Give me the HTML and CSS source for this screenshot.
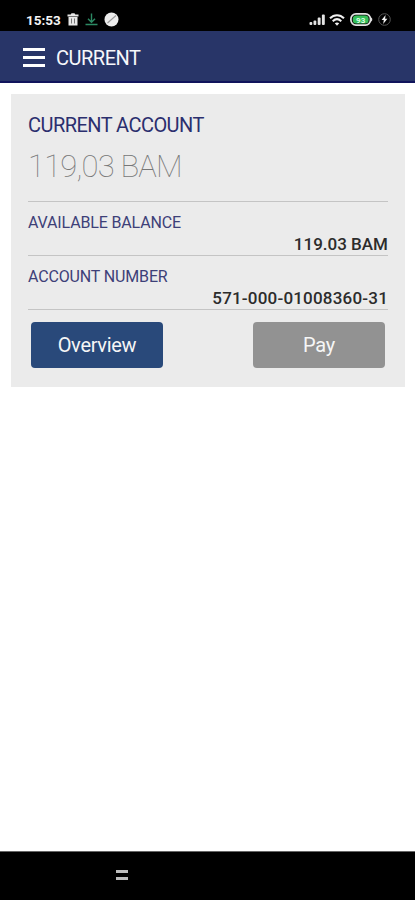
FILE: index.html
```
<!DOCTYPE html>
<html lang="en">
<head>
    <meta charset="UTF-8">
    <meta name="viewport" content="width=device-width, initial-scale=1.0">
    <title>Current</title>
    <link rel="stylesheet" href="styles.css">
</head>
<body>
    <div class="status-bar">
        <div class="status-left">
            <span class="time">15:53</span>
            <svg class="icon-trash" width="12" height="13" viewBox="0 0 12 13">
                <path d="M0.5 1.5h3.2l0.8-1.3h3l0.8 1.3h3.2v2H0.5zM1.5 4h9v8.5h-9z" fill="#e8e8e8"/>
                <path d="M4.5 5.5v5M7.5 5.5v5" stroke="#777" stroke-width="1"/>
            </svg>
            <svg class="icon-download" width="13" height="13" viewBox="0 0 13 13" fill="none" stroke="#2c8a64" stroke-width="1.4">
                <path d="M6.5 0.5v8.5M3 5.8l3.5 3.5L10 5.8M0.5 11.5h12"/>
            </svg>
            <svg width="15" height="15" viewBox="0 0 15 15">
                <circle cx="7.5" cy="7.5" r="7" fill="#ececec"/>
                <path d="M3.5 11L12 3.5" stroke="#999" stroke-width="1.1"/>
            </svg>
        </div>
        <div class="status-right">
            <svg width="16" height="11" viewBox="0 0 16 11" fill="#e4e4e4">
                <rect x="0.5" y="8" width="2.8" height="3" rx="1"/>
                <rect x="4.5" y="6.5" width="2.8" height="4.5" rx="1"/>
                <rect x="8.7" y="3.5" width="2.9" height="7.5" rx="1"/>
                <rect x="12.9" y="0.5" width="2.9" height="10.5" rx="1"/>
            </svg>
            <svg width="16" height="12" viewBox="0 0 16 12" fill="none" stroke="#f0f0f0" stroke-width="2">
                <path d="M1 4.3C5 0.2 11 0.2 15 4.3M3.7 7.2c2.6-2.5 6-2.5 8.6 0"/>
                <path d="M5.8 9.2Q8 7.6 10.2 9.2L8 11.8z" fill="#f0f0f0" stroke="none"/>
            </svg>
            <svg class="icon-battery" width="23" height="13" viewBox="0 0 23 13">
                <path d="M21 4.5c1.7 0.3 1.7 3.7 0 4z" fill="#ddd"/>
                <rect x="0.9" y="0.9" width="19.6" height="11.2" rx="5" fill="#111" stroke="#e2e2e2" stroke-width="1.7"/>
                <rect x="2.8" y="2.6" width="15.8" height="7.8" rx="3.5" fill="#35bf58"/>
                <text class="battery-level" x="10.7" y="9.5" text-anchor="middle">93</text>
            </svg>
            <svg width="13" height="13" viewBox="0 0 13 13">
                <circle cx="6.5" cy="6.5" r="5.8" fill="none" stroke="#555" stroke-width="1"/>
                <path d="M7.6 2L3.6 7h2.2L5.2 11l4.2-5.2H7.1z" fill="#f2f2f2"/>
            </svg>
        </div>
    </div>

    <div class="header">
        <div class="menu-btn">
            <span class="menu-line"></span>
            <span class="menu-line"></span>
            <span class="menu-line"></span>
        </div>
        <div class="header-title">CURRENT</div>
    </div>

    <div class="content">
        <div class="card">
            <div class="summary">
                <div class="card-title">CURRENT ACCOUNT</div>
                <div class="amount">119,03 BAM</div>
            </div>
            <div class="row">
                <div class="row-label">AVAILABLE BALANCE</div>
                <div class="row-value">119.03 BAM</div>
            </div>
            <div class="row">
                <div class="row-label">ACCOUNT NUMBER</div>
                <div class="row-value account-number">571-000-01008360-31</div>
            </div>
            <div class="buttons">
                <button class="btn btn-primary">Overview</button>
                <button class="btn btn-secondary">Pay</button>
            </div>
        </div>
    </div>

    <div class="nav-bar">
        <div class="nav-menu"></div>
    </div>
</body>
</html>
```

FILE: styles.css
```
* {
    box-sizing: border-box;
}

body {
    display: flex;
    flex-direction: column;
    width: 415px;
    height: 900px;
    margin: 0;
    overflow: hidden;
    background: #fff;
    font-family: Roboto, sans-serif;
}

.status-bar {
    display: flex;
    justify-content: space-between;
    height: 31px;
    padding: 8px 24px 0 26px;
    background: #000;
}

.status-left,
.status-right {
    display: flex;
    align-items: center;
    height: 23px;
}

.status-right {
    gap: 4px;
}

.time {
    width: 35px;
    margin-right: 6px;
    color: #f4f4f4;
    font-size: 13.5px;
    font-weight: 700;
}

.icon-trash {
    margin-right: 6px;
}

.icon-download {
    margin-right: 6px;
}

.icon-battery {
    margin: 0 1px;
}

.battery-level {
    fill: #d8ffe2;
    font-size: 8px;
    font-weight: 700;
}

.header {
    display: flex;
    align-items: center;
    height: 52px;
    padding: 0 23px;
    background: #283568;
    border-bottom: 2px solid #10145c;
}

.menu-btn {
    display: flex;
    flex-direction: column;
    gap: 5px;
    width: 22px;
    margin: 3px 11px 0 0;
}

.menu-line {
    height: 3px;
    background: #fff;
}

.header-title {
    margin-top: 3px;
    color: #f6f7fb;
    font-size: 20px;
    line-height: 24px;
    letter-spacing: -0.5px;
}

.content {
    flex: 1;
    padding: 11px 10px 0 11px;
}

.card {
    height: 293px;
    padding: 0 17px;
    background: #ebebeb;
}

.summary {
    height: 108px;
    padding-top: 19px;
    border-bottom: 1px solid #c4c4c4;
}

.card-title {
    color: #2b2f6e;
    font-size: 20px;
    line-height: 24px;
    letter-spacing: -0.55px;
}

.amount {
    margin-top: 11px;
    color: #777;
    font-size: 31px;
    font-weight: 100;
    line-height: 38px;
    letter-spacing: -0.8px;
}

.row {
    height: 54px;
    padding-top: 11px;
    border-bottom: 1px solid #c4c4c4;
}

.row-label {
    color: #3d4078;
    font-size: 16px;
    line-height: 20px;
    letter-spacing: -0.15px;
}

.row-value {
    margin-top: 1px;
    color: #2c2c2c;
    font-size: 17px;
    font-weight: 500;
    line-height: 20px;
    text-align: right;
}

.account-number {
    letter-spacing: 0.2px;
}

.buttons {
    display: flex;
    justify-content: space-between;
    padding: 12px 3px 0;
}

.btn {
    width: 132px;
    height: 46px;
    padding: 0;
    border: none;
    border-radius: 4px;
    color: #f6f6f6;
    font-family: inherit;
    font-size: 20px;
    letter-spacing: -0.3px;
}

.btn-primary {
    background: #29497a;
}

.btn-secondary {
    background: #929292;
}

.nav-bar {
    height: 49px;
    padding: 18px 0 0 116px;
    background: #000;
    border-top: 1px solid #666;
}

.nav-menu {
    width: 12px;
    height: 10px;
    border: solid #bdbdbd;
    border-width: 3px 0;
}
```
